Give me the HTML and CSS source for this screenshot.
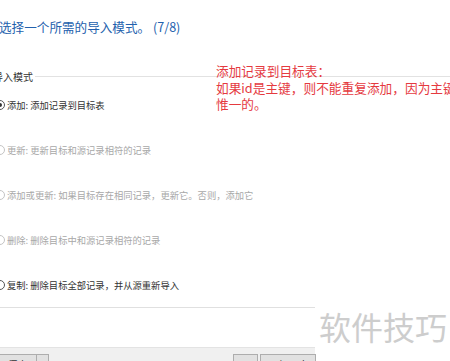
FILE: index.html
```html
<!DOCTYPE html>
<html lang="zh-CN">

<head>
    <meta charset="UTF-8">
    <meta name="viewport" content="width=device-width, initial-scale=1.0">
    <title>导入向导</title>
    <link rel="stylesheet" href="styles.css">
</head>

<body>
    <div class="wizard">
        <h1 class="title">选择一个所需的导入模式。 (7/8)</h1>

        <div class="group-head">
            <span>导入模式</span>
            <div class="rule"></div>
        </div>

        <ul class="modes">
            <li class="on"><span class="radio checked"></span>添加: 添加记录到目标表</li>
            <li class="off"><span class="radio"></span>更新: 更新目标和源记录相符的记录</li>
            <li class="off"><span class="radio"></span>添加或更新: 如果目标存在相同记录，更新它。否则，添加它</li>
            <li class="off"><span class="radio"></span>删除: 删除目标中和源记录相符的记录</li>
            <li class="on"><span class="radio"></span>复制: 删除目标全部记录，并从源重新导入</li>
        </ul>

        <div class="bottom">
            <div class="sep"></div>
            <div class="space"></div>
            <div class="footer">
                <div class="btn save">保存</div>
                <div class="btn drop">▾</div>
                <div class="push"></div>
                <div class="btn first">&lt;&lt;</div>
                <div class="btn prev">&lt; 上一步</div>
            </div>
        </div>
    </div>

    <div class="note">
        <p>添加记录到目标表：</p>
        <p>如果id是主键，则不能重复添加，因为主键是唯</p>
        <p>惟一的。</p>
    </div>

    <div class="mark">软件技巧</div>
</body>

</html>
```

FILE: styles.css
```css
* {
    margin: 0;
    padding: 0;
    list-style: none;
    box-sizing: border-box;
    font-family: "Noto Sans CJK SC", "Noto Sans", sans-serif;
}

body {
    width: 450px;
    height: 361px;
    overflow: hidden;
    background-color: white;
    position: relative;
}

.title {
    font-size: 12.6px;
    font-weight: 400;
    line-height: 18px;
    padding-top: 18px;
    color: #2361ad;
    margin-left: -1px;
}

.group-head {
    display: flex;
    align-items: center;
    height: 12px;
    margin-top: 34px;
    margin-left: -7px;
}

.group-head span {
    font-size: 10px;
    color: #333;
}

.group-head .rule {
    flex: 1;
    height: 1px;
    background-color: #e2e2e2;
    margin-left: 2px;
}

.modes li {
    height: 45px;
    display: flex;
    align-items: center;
    font-size: 9.3px;
    margin-left: -5px;
}

.modes li.on {
    color: #333;
}

.modes li.off {
    color: #a8a8a8;
}

.radio {
    width: 10px;
    height: 10px;
    border-radius: 50%;
    border: 1px solid #555;
    margin-right: 2px;
    position: relative;
    flex-shrink: 0;
}

.modes li.off .radio {
    border-color: #c4c4c4;
}

.radio.checked::after {
    content: "";
    position: absolute;
    top: 2px;
    left: 2px;
    width: 4px;
    height: 4px;
    border-radius: 50%;
    background-color: #333;
}

.bottom {
    width: 315px;
}

.sep {
    height: 1px;
    background-color: #e0e0e0;
}

.space {
    height: 39px;
}

.footer {
    height: 20px;
    background-color: #f0f0f0;
    border-top: 1px solid #e3e3e3;
    display: flex;
    align-items: flex-start;
    padding-top: 6px;
}

.btn {
    height: 22px;
    border: 1px solid #adadad;
    background-color: #e1e1e1;
    font-size: 11px;
    color: #333;
    text-align: center;
    line-height: 20px;
}

.save {
    width: 38px;
    margin-left: -1px;
}

.drop {
    width: 13px;
    margin-left: -1px;
    font-size: 8px;
}

.push {
    flex: 1;
}

.first {
    width: 25px;
    margin-right: 2px;
}

.prev {
    width: 56px;
    margin-right: -1px;
}

.note {
    position: absolute;
    top: 63px;
    left: 216px;
    width: 260px;
    color: #e53a3f;
    font-size: 12.7px;
    line-height: 16.5px;
    white-space: nowrap;
}

.mark {
    position: absolute;
    top: 304px;
    left: 319px;
    font-size: 32px;
    line-height: 44px;
    color: #cdcdcd;
    background-color: white;
}
```
